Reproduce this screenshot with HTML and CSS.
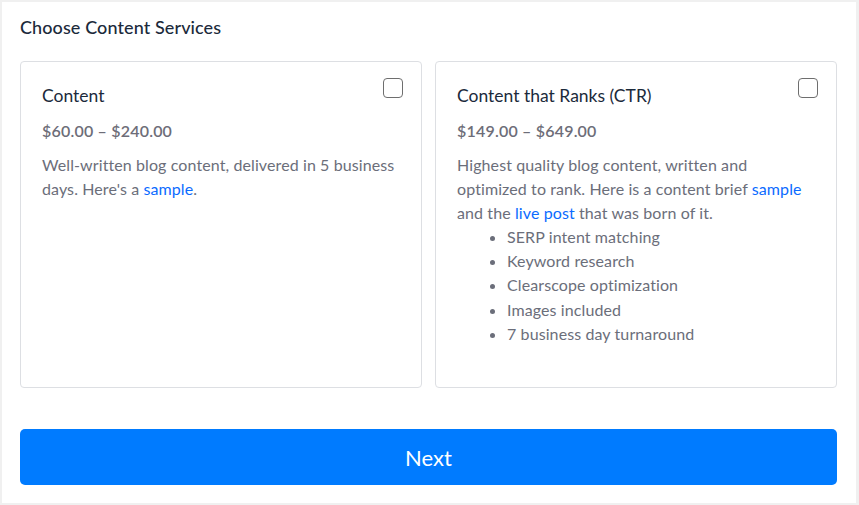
FILE: index.html
```html
<!DOCTYPE html>
<html>
<head>
<meta name="viewport" content="width=device-width, initial-scale=1.0">
  <title>Choose Content Services</title>
<link rel="stylesheet" href="styles.css">
</head>
<body>
<div class="panel">
  <h1 class="heading">Choose Content Services</h1>

  <div class="cards">
    <div class="card">
      <div class="card-top">
        <h2 class="card-title">Content</h2>
        <span class="check"></span>
      </div>
      <p class="price">$60.00 &ndash; $240.00</p>
      <p class="desc">Well-written blog content, delivered in 5 business days. Here's a <a href="#">sample</a>.</p>
    </div>

    <div class="card">
      <div class="card-top">
        <h2 class="card-title">Content that Ranks (CTR)</h2>
        <span class="check"></span>
      </div>
      <p class="price">$149.00 &ndash; $649.00</p>
      <p class="desc">Highest quality blog content, written and optimized to rank. Here is a content brief <a href="#">sample</a> and the <a href="#">live post</a> that was born of it.</p>
      <ul class="features">
        <li>SERP intent matching</li>
        <li>Keyword research</li>
        <li>Clearscope optimization</li>
        <li>Images included</li>
        <li>7 business day turnaround</li>
      </ul>
    </div>
  </div>

  <button class="next-btn" type="button">Next</button>
</div>
</body>
</html>
```

FILE: styles.css
```css
* {box-sizing: border-box;}

body {
  margin: 0;
  padding: 2px 3px 2px 2px;
  background: #f0f0f0;
  font-family: Lato, "Open Sans", sans-serif;
}

.panel {
  background: #fff;
  height: 501px;
  padding: 14px 19px 18px 18px;
}

.heading {
  margin: 0;
  font-size: 18px;
  line-height: 22px;
  font-weight: 500;
  color: #1b2a3b;
  letter-spacing: 0.1px;
}

.cards {
  margin-top: 23px;
  display: grid;
  grid-template-columns: 1fr 1fr;
  gap: 13px;
}

.card {
  height: 327px;
  border: 1px solid #dddfe3;
  border-radius: 4px;
  padding: 22px 21px;
}

.card-top {
  display: flex;
  justify-content: space-between;
  align-items: flex-start;
}

.card-title {
  margin: 0;
  font-size: 17.5px;
  line-height: 24px;
  font-weight: 400;
  color: #1b2a3b;
}

/* checkbox look */
.check {
  width: 20px;
  height: 20px;
  margin-top: -6px;
  margin-right: -3px;
  border: 1.5px solid #6e6e6e;
  border-radius: 4px;
  flex-shrink: 0;
}

.price {
  margin: 11px 0 0;
  font-size: 16px;
  line-height: 24px;
  font-weight: 600;
  letter-spacing: 0.2px;
  color: #6d6d78;
}

.desc {
  margin: 10px 0 0;
  font-size: 16px;
  line-height: 24px;
  letter-spacing: 0.1px;
  color: #6b6e7a;
}

.desc a {
  color: #0b6bff;
  text-decoration: none;
}

.features {
  margin: 0;
  padding-left: 50px;
  font-size: 16px;
  line-height: 24.2px;
  letter-spacing: 0.1px;
  color: #6b6e7a;
}

.next-btn {
  display: block;
  width: 100%;
  height: 56px;
  margin-top: 41px;
  border: 0;
  border-radius: 5px;
  background: #007bff;
  color: #fff;
  font-family: Lato, "Open Sans", sans-serif;
  font-size: 22px;
  cursor: pointer;
}
```
